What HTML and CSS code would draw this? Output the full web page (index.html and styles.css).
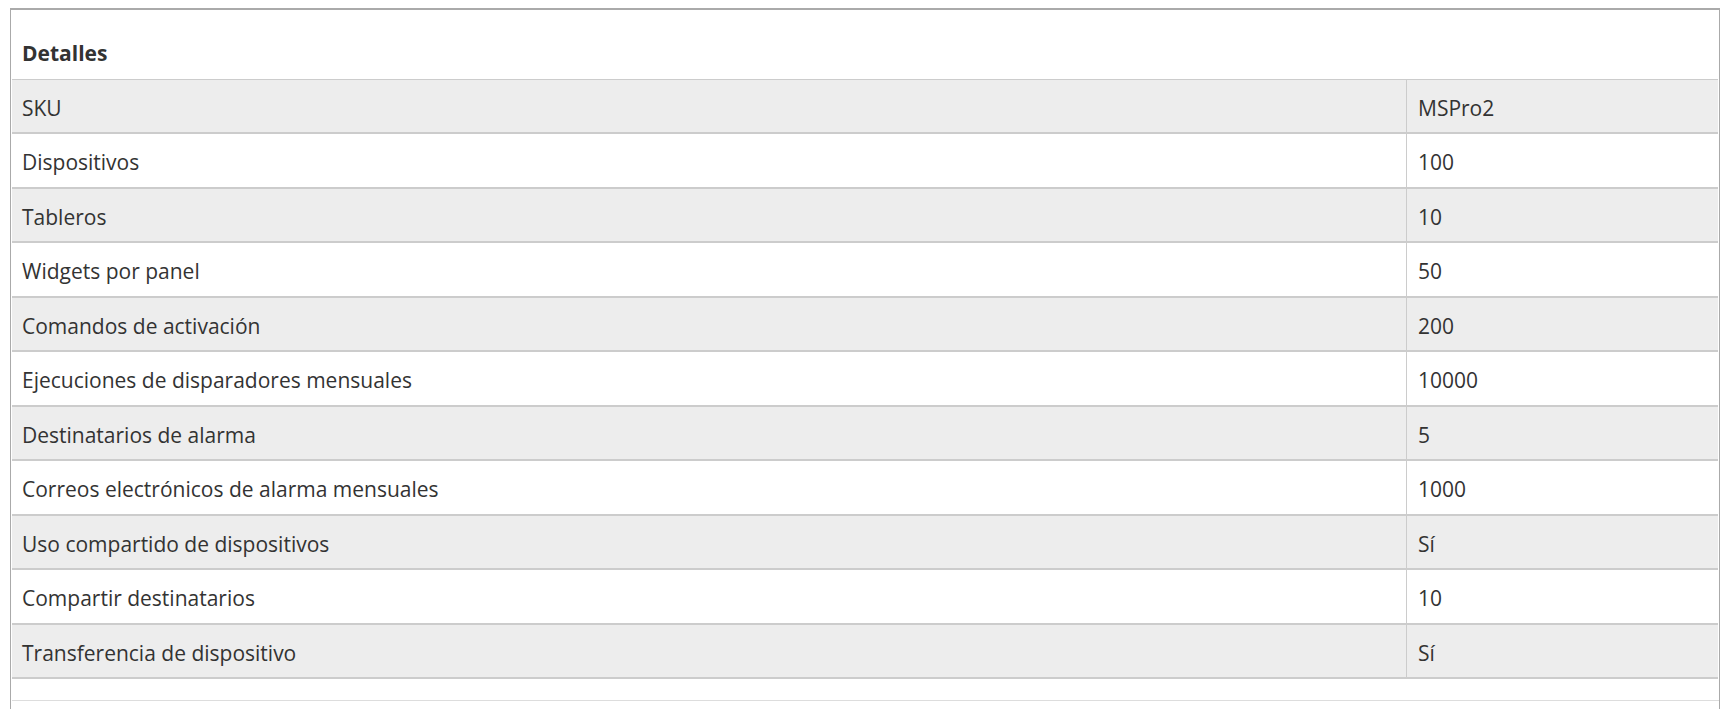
FILE: index.html
```html
<!DOCTYPE html>
<html lang="es">
<head>
    <meta charset="UTF-8">
    <title>Detalles</title>
    <link rel="stylesheet" href="styles.css">
</head>
<body>
    <div class="panel">
        <div class="section">
            <h3 class="section-title">Detalles</h3>
            <table class="details">
                <tr><td class="label">SKU</td><td class="value">MSPro2</td></tr>
                <tr><td class="label">Dispositivos</td><td class="value">100</td></tr>
                <tr><td class="label">Tableros</td><td class="value">10</td></tr>
                <tr><td class="label">Widgets por panel</td><td class="value">50</td></tr>
                <tr><td class="label">Comandos de activación</td><td class="value">200</td></tr>
                <tr><td class="label">Ejecuciones de disparadores mensuales</td><td class="value">10000</td></tr>
                <tr><td class="label">Destinatarios de alarma</td><td class="value">5</td></tr>
                <tr><td class="label">Correos electrónicos de alarma mensuales</td><td class="value">1000</td></tr>
                <tr><td class="label">Uso compartido de dispositivos</td><td class="value">Sí</td></tr>
                <tr><td class="label">Compartir destinatarios</td><td class="value">10</td></tr>
                <tr><td class="label">Transferencia de dispositivo</td><td class="value">Sí</td></tr>
            </table>
            <div class="section-end"></div>
        </div>
    </div>
</body>
</html>
```

FILE: styles.css
```css
body {
    margin: 0;
    background: #fff;
    font-family: "Open Sans", "Liberation Sans", sans-serif;
    color: #333;
}

.panel {
    margin-left: 10px;
    width: 1707px;
    height: 701px;
    padding-left: 1px;
    box-sizing: content-box;
    border-left: 1px solid #aaa;
    border-right: 1px solid #aaa;
    border-bottom: 1px solid #aaa;
}

.section {
    margin-top: 8px;
    border-top: 2px solid #aaa;
    margin-left: -1px; /* linea superior llega al borde */
    padding-left: 1px;
}

.section-title {
    margin: 0;
    padding: 28px 0 11px 10px;
    font-size: 21px;
    font-weight: 700;
    line-height: 30px;
    color: #333;
}

.details {
    width: 1706px;
    border-collapse: separate;
    border-spacing: 0;
    border-top: 1px solid #ccc;
    font-size: 21px;
}

.details td {
    padding: 4px 0 0 10px;
    height: 48.45px;
    line-height: 48.45px;
    border-bottom: 2px solid #ccc;
    white-space: nowrap;
}

.details tr:nth-child(odd) td {
    background: #ededed;
}

.details .label {
    width: 1384px;
}

.details .value {
    padding-left: 11px;
    border-left: 1px solid #ccc;
}

.section-end {
    height: 21px;
    border-bottom: 1px solid #ddd;
}
```
